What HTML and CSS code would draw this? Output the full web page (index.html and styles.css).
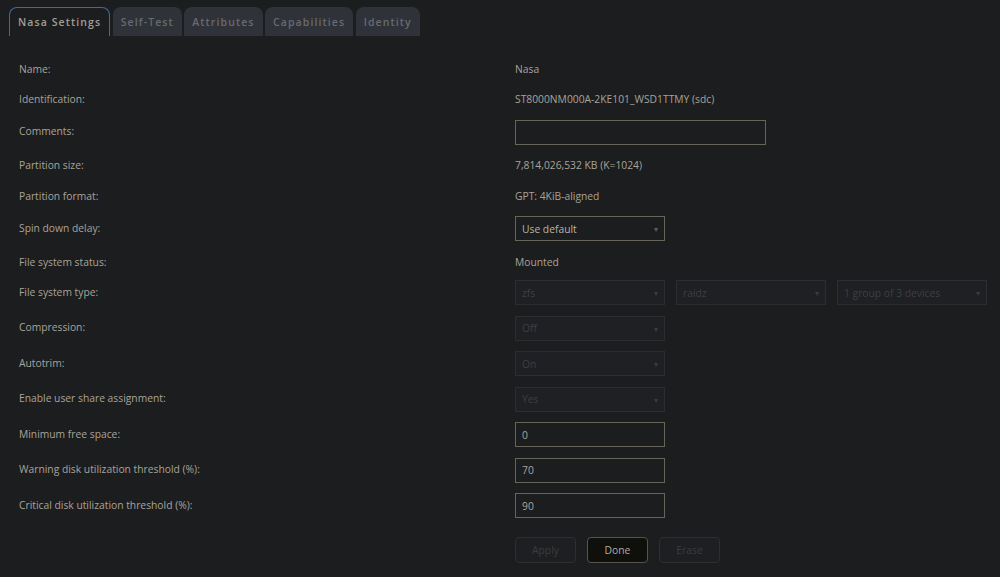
FILE: index.html
```html
<!DOCTYPE html>
<html lang="en">
<head>
    <meta charset="UTF-8">
    <title>Nasa Settings</title>
    <link rel="stylesheet" href="styles.css">
</head>
<body>
    <div class="tabs">
        <div class="tab active">Nasa Settings</div>
        <div class="tab">Self-Test</div>
        <div class="tab">Attributes</div>
        <div class="tab">Capabilities</div>
        <div class="tab">Identity</div>
    </div>

    <div class="settings">
        <div class="row text"><div class="label">Name:</div><div class="value">Nasa</div></div>
        <div class="row text"><div class="label">Identification:</div><div class="value">ST8000NM000A-2KE101_WSD1TTMY (sdc)</div></div>
        <div class="row"><div class="label">Comments:</div><div class="value"><div class="input wide"></div></div></div>
        <div class="row text"><div class="label">Partition size:</div><div class="value">7,814,026,532 KB (K=1024)</div></div>
        <div class="row text"><div class="label">Partition format:</div><div class="value">GPT: 4KiB-aligned</div></div>
        <div class="row"><div class="label">Spin down delay:</div><div class="value"><div class="select">Use default<span class="caret">&#9662;</span></div></div></div>
        <div class="row text short"><div class="label">File system status:</div><div class="value">Mounted</div></div>
        <div class="row"><div class="label">File system type:</div>
            <div class="value group">
                <div class="select disabled">zfs<span class="caret">&#9662;</span></div>
                <div class="select disabled">raidz<span class="caret">&#9662;</span></div>
                <div class="select disabled">1 group of 3 devices<span class="caret">&#9662;</span></div>
            </div>
        </div>
        <div class="row"><div class="label">Compression:</div><div class="value"><div class="select disabled">Off<span class="caret">&#9662;</span></div></div></div>
        <div class="row"><div class="label">Autotrim:</div><div class="value"><div class="select disabled">On<span class="caret">&#9662;</span></div></div></div>
        <div class="row"><div class="label">Enable user share assignment:</div><div class="value"><div class="select disabled">Yes<span class="caret">&#9662;</span></div></div></div>
        <div class="row"><div class="label">Minimum free space:</div><div class="value"><div class="input">0</div></div></div>
        <div class="row"><div class="label">Warning disk utilization threshold (%):</div><div class="value"><div class="input">70</div></div></div>
        <div class="row"><div class="label">Critical disk utilization threshold (%):</div><div class="value"><div class="input">90</div></div></div>
        <div class="row buttons">
            <div class="label"></div>
            <div class="value group">
                <div class="button disabled">Apply</div>
                <div class="button">Done</div>
                <div class="button disabled">Erase</div>
            </div>
        </div>
    </div>
</body>
</html>
```

FILE: styles.css
```css
body {
    margin: 0;
    background-color: #1c1d1f;
    color: #a8a49a;
    font-family: 'Open Sans', 'Liberation Sans', sans-serif;
    font-size: 10.3px;
    height: 577px;
    overflow: hidden;
}
.tabs {
    display: flex;
    gap: 2.5px;
    padding: 7px 0 0 9px;
}
.tab {
    height: 29px;
    box-sizing: border-box;
    padding: 0 8px;
    display: flex;
    align-items: center;
    background-color: #2f3238;
    color: #676b70;
    border-radius: 8px 8px 0 0;
    font-size: 10.5px;
    font-weight: 600;
    letter-spacing: 1.1px;
}
.tab.active {
    background-color: #1c1d1f;
    color: #a39e92;
    border: 1px solid #3d6aa5;
    border-bottom: none;
}
.settings {
    padding-top: 22.5px;
}
.row {
    display: flex;
    align-items: center;
    height: 25px;
    margin-bottom: 10.5px;
}
.row.text {
    height: 20px;
}
.row.short {
    margin-bottom: 8.5px;
}
.label {
    width: 496px;
    padding-left: 19px;
    flex-shrink: 0;
    margin-top: -2px;
}
.value {
    display: flex;
    align-items: center;
}
.row.text .label,
.row.text .value {
    margin-top: 0;
}
.group {
    gap: 11px;
}
.input, .select {
    box-sizing: border-box;
    width: 150px;
    height: 25px;
    border: 1px solid #67645a;
    padding: 0 6px;
    display: flex;
    align-items: center;
    color: #a8a49a;
}
.input.wide {
    width: 251px;
}
.select {
    justify-content: space-between;
    color: #b8b4aa;
}
.caret {
    font-size: 8px;
    color: #5a6068;
}
.select.disabled {
    border-color: #2b2d30;
    background-color: #1f2023;
    color: #3d3f42;
}
.select.disabled .caret {
    color: #3a3c40;
}
.row.buttons {
    margin-top: 19px;
    height: 26px;
}
.button {
    box-sizing: border-box;
    width: 61px;
    height: 26px;
    border: 1px solid #56544d;
    border-radius: 4px;
    background-color: #0f0f0c;
    color: #b0ada4;
    display: flex;
    align-items: center;
    justify-content: center;
}
.button.disabled {
    background-color: #1e1f22;
    border-color: #2c2e31;
    color: #3b3d40;
}
```
